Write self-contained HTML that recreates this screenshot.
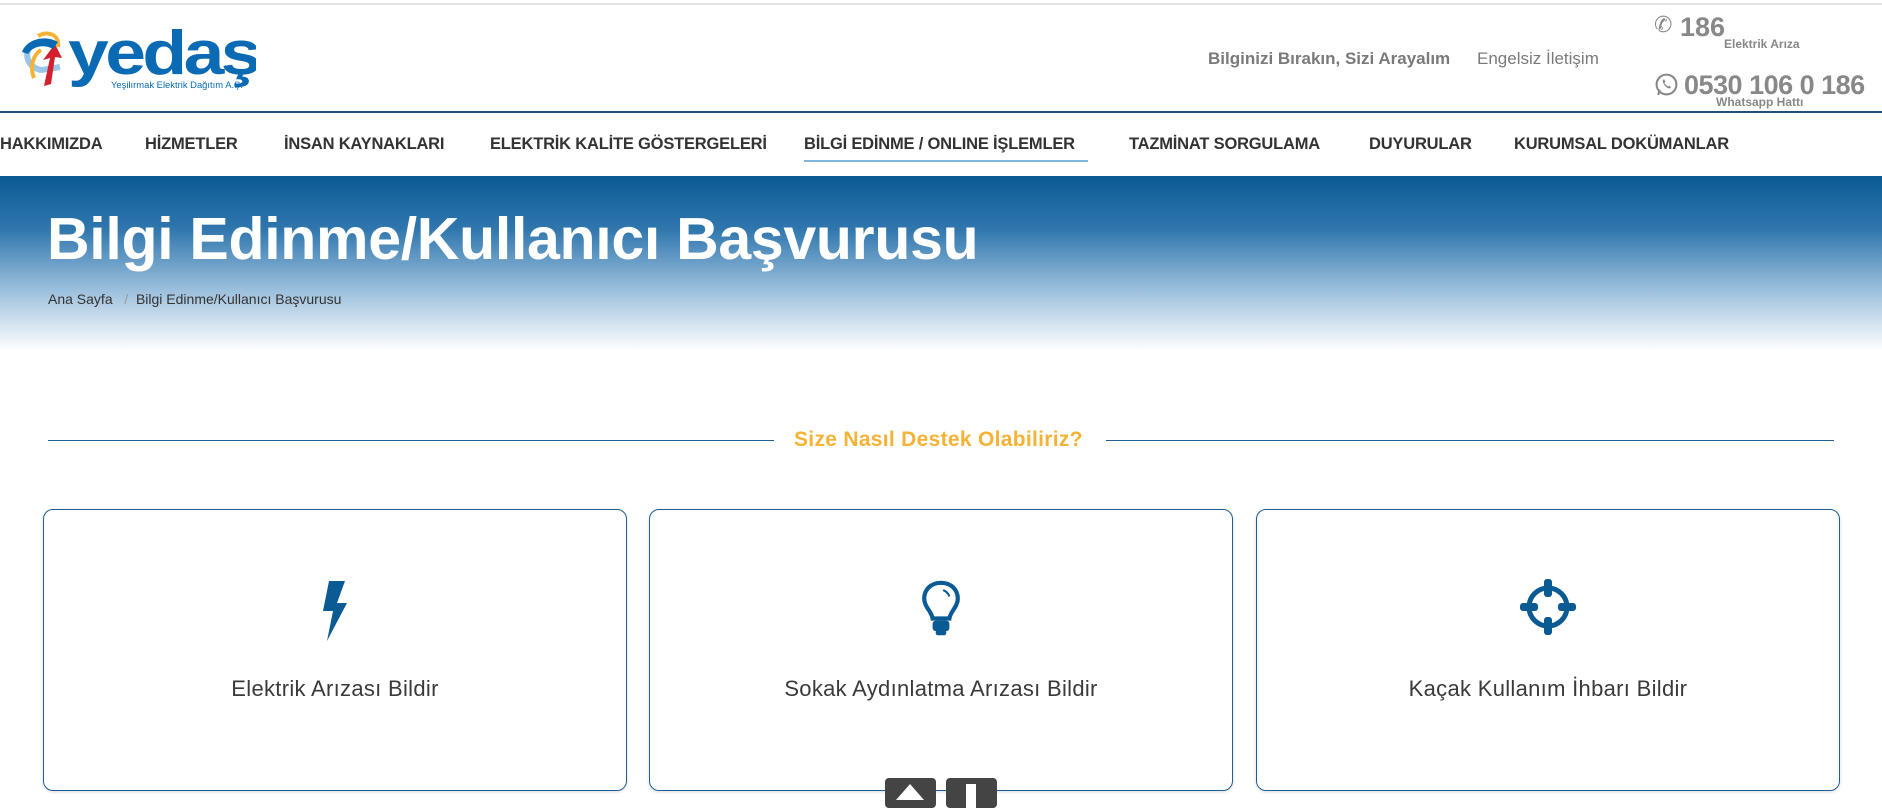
<!DOCTYPE html>
<html><head><meta charset="utf-8"><style>
*{margin:0;padding:0;box-sizing:border-box}
body{width:1882px;height:802px;overflow:hidden;background:#fff;font-family:"Liberation Sans",sans-serif;position:relative}
.a{position:absolute;white-space:nowrap}
.nav{top:135px;font-size:16.5px;font-weight:bold;color:#333;letter-spacing:-0.2px}
.card{position:absolute;top:509px;width:584px;height:282px;border:1px solid #1f5f96;border-radius:10px;box-shadow:0 1px 3px rgba(0,0,0,.15)}
.card .t{position:absolute;top:166px;width:100%;text-align:center;font-size:22px;color:#3a3a3a;letter-spacing:0.3px}
.card svg{position:absolute;left:50%;top:68px;transform:translateX(-50%)}
</style></head><body>
<div class="a" style="top:3px;left:0;width:1882px;height:2px;background:#e2e2e2"></div>
<!-- logo -->
<svg class="a" style="left:16px;top:22px" width="240" height="70" viewBox="0 0 240 70">
<path d="M14 24 C8 34 12 46 26 48 L44 45" stroke="#9cc6e8" stroke-width="6" fill="none"/>
<path d="M22 14 C32 8 44 13 42 25" stroke="#f5b335" stroke-width="4" fill="none"/>
<path d="M18 56 C13 44 18 32 25 28" stroke="#f5b335" stroke-width="4" fill="none"/>
<path d="M28 64 L34 36 L27 38 L39 22 L46 36 L39 35 L35 62 Z" fill="#d3202f"/>
<path d="M6 30 C10 18 28 12 42 20 L37 27 C28 22 17 24 12 32 Z" fill="#0a6ab4"/>
<text x="52" y="52" font-family="Liberation Sans" font-weight="bold" font-size="62" fill="#0a6ab4" letter-spacing="-3" textLength="190" lengthAdjust="spacingAndGlyphs">yedaş</text>
<text x="95" y="66" font-family="Liberation Sans" font-size="9" fill="#0a6ab4" textLength="132" lengthAdjust="spacingAndGlyphs">Yeşilırmak Elektrik Dağıtım A.Ş.</text>
</svg>
<div class="a" style="left:1208px;top:49px;font-size:17px;font-weight:bold;color:#7a7a7a">Bilginizi Bırakın, Sizi Arayalım</div>
<div class="a" style="left:1477px;top:49px;font-size:17px;color:#7a7a7a">Engelsiz İletişim</div>
<div class="a" style="left:1654px;top:12px;font-size:22px;color:#888">✆</div>
<div class="a" style="left:1680px;top:12px;font-size:27px;font-weight:bold;color:#888">186</div>
<div class="a" style="left:1724px;top:37px;font-size:12px;font-weight:bold;color:#888">Elektrik Arıza</div>
<svg class="a" style="left:1654px;top:72px" width="25" height="25" viewBox="0 0 24 24"><circle cx="12" cy="12" r="9.5" fill="none" stroke="#888" stroke-width="2"/><path d="M4 22 L5.5 17" stroke="#888" stroke-width="2"/><path d="M8.5 7.5 C8 10 10 14 14.5 16 L16.5 14.5 L14.5 13 L13.5 14 C12 13 11 12 10 10.5 L11 9.5 L9.8 7 Z" fill="#888"/></svg>
<div class="a" style="left:1684px;top:70px;font-size:27px;font-weight:bold;color:#888;letter-spacing:-0.5px">0530 106 0 186</div>
<div class="a" style="left:1716px;top:95px;font-size:12px;font-weight:bold;color:#888">Whatsapp Hattı</div>
<div class="a" style="top:111px;left:0;width:1882px;height:2px;background:#1d4f7a"></div>
<div class="a nav" style="left:0">HAKKIMIZDA</div>
<div class="a nav" style="left:145px">HİZMETLER</div>
<div class="a nav" style="left:284px">İNSAN KAYNAKLARI</div>
<div class="a nav" style="left:490px">ELEKTRİK KALİTE GÖSTERGELERİ</div>
<div class="a nav" style="left:804px">BİLGİ EDİNME / ONLINE İŞLEMLER</div>
<div class="a" style="left:804px;top:160px;width:284px;height:2px;background:#7fb6e0"></div>
<div class="a nav" style="left:1129px">TAZMİNAT SORGULAMA</div>
<div class="a nav" style="left:1369px">DUYURULAR</div>
<div class="a nav" style="left:1514px">KURUMSAL DOKÜMANLAR</div>
<div class="a" style="top:176px;left:0;width:1882px;height:175px;background:linear-gradient(#0b5a94 0%,#2f76ad 30%,#9bbfdc 65%,#fff 100%)"></div>
<div class="a" style="left:47px;top:205px;font-size:59px;font-weight:bold;color:#fff;letter-spacing:-0.3px">Bilgi Edinme/Kullanıcı Başvurusu</div>
<div class="a" style="left:48px;top:291px;font-size:14px;color:#333">Ana Sayfa &nbsp; <span style="color:#999">/</span> &nbsp;Bilgi Edinme/Kullanıcı Başvurusu</div>
<div class="a" style="left:48px;top:440px;width:726px;height:1px;background:#1f5f96"></div>
<div class="a" style="left:1106px;top:440px;width:728px;height:1px;background:#1f5f96"></div>
<div class="a" style="left:794px;top:428px;font-size:21px;font-weight:bold;color:#f5b335;letter-spacing:0.3px">Size Nasıl Destek Olabiliriz?</div>
<div class="card" style="left:43px"><svg width="40" height="64" viewBox="0 0 40 62"><path d="M14 2 L30 2 L22 24 L32 24 L12 62 L18 32 L8 32 Z" fill="#0a5a94"/></svg><div class="t">Elektrik Arızası Bildir</div></div>
<div class="card" style="left:649px"><svg width="42" height="60" viewBox="0 0 40 56"><path d="M20 4 C10 4 4 11 4 19 C4 27 11 31 12 38 L28 38 C29 31 36 27 36 19 C36 11 30 4 20 4 Z" fill="none" stroke="#0a5a94" stroke-width="4"/><path d="M22 11 C25 12 27 14 28 17" stroke="#0a5a94" stroke-width="2" fill="none"/><rect x="12" y="40" width="16" height="10" rx="3" fill="#0a5a94"/><rect x="15" y="49" width="10" height="5" rx="2" fill="#0a5a94"/></svg><div class="t">Sokak Aydınlatma Arızası Bildir</div></div>
<div class="card" style="left:1256px"><svg width="58" height="58" viewBox="0 0 58 58"><circle cx="29" cy="29" r="19" fill="none" stroke="#0a5a94" stroke-width="5"/><rect x="25" y="1" width="8" height="18" rx="3" fill="#0a5a94"/><rect x="25" y="39" width="8" height="18" rx="3" fill="#0a5a94"/><rect x="1" y="25" width="18" height="8" rx="3" fill="#0a5a94"/><rect x="39" y="25" width="18" height="8" rx="3" fill="#0a5a94"/></svg><div class="t">Kaçak Kullanım İhbarı Bildir</div></div>
<div class="a" style="left:885px;top:778px;width:51px;height:30px;background:#444;border-radius:4px"><div style="position:absolute;left:11px;top:6px;border-left:14px solid transparent;border-right:14px solid transparent;border-bottom:16px solid #fff"></div></div>
<div class="a" style="left:946px;top:778px;width:51px;height:30px;background:#444;border-radius:4px"><div style="position:absolute;left:20px;top:6px;width:10px;height:24px;background:#fff"></div></div>
</body></html>
